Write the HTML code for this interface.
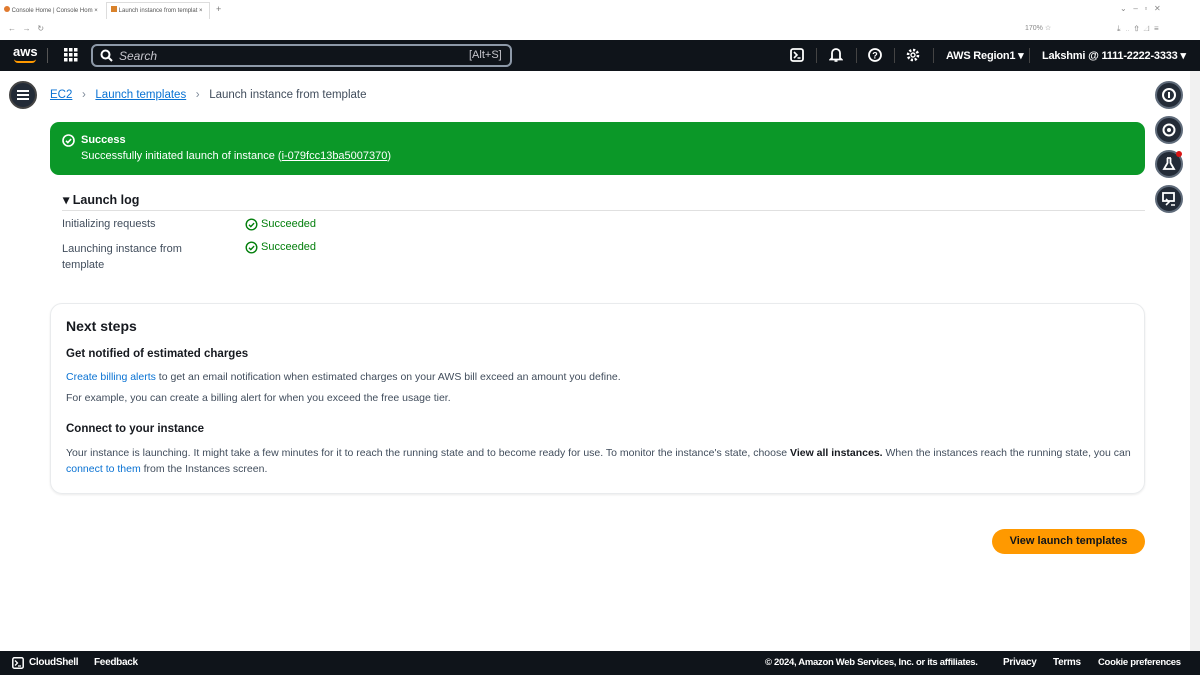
<!DOCTYPE html>
<html><head><meta charset="utf-8"><style>
*{margin:0;padding:0;box-sizing:border-box}
body{width:1200px;height:675px;overflow:hidden;background:#fff;font-family:"Liberation Sans",sans-serif;color:#16191f;position:relative;font-size:11px}
.abs{position:absolute}
.top{left:0;top:0;width:1200px;height:40px;background:#fff}
.nav{left:0;top:40px;width:1200px;height:31px;background:#0f141a;color:#fff}
.foot{left:0;top:651px;width:1200px;height:24px;background:#0f141a;color:#fff;font-size:10px;font-weight:bold;letter-spacing:-0.3px}
.link{color:#0972d3;text-decoration:underline}
.circ{width:28px;height:28px;border-radius:50%;background:#232b37;border:2px solid #5f6b7a}
.sb{left:1190px;top:71px;width:10px;height:580px;background:#f1f1f1}
</style></head><body>
<div class="abs top">
 <div class="abs" style="left:4px;top:4px;width:96px;height:14px;font-size:6px;color:#555;line-height:14px"><span style="display:inline-block;width:6px;height:6px;border-radius:50%;background:#e07a2f"></span> Console Home | Console Hom ×</div>
 <div class="abs" style="left:106px;top:2px;width:104px;height:17px;border:1px solid #ddd;border-bottom:none;font-size:6px;color:#555;line-height:16px;padding-left:4px"><span style="display:inline-block;width:6px;height:6px;background:#d9822b"></span> Launch instance from templat ×</div>
 <div class="abs" style="left:216px;top:4px;font-size:9px;color:#777">+</div>
 <div class="abs" style="left:8px;top:24px;font-size:8px;color:#888">←&nbsp;&nbsp;&nbsp;→&nbsp;&nbsp;&nbsp;↻</div>
 <div class="abs" style="left:1120px;top:4px;font-size:8px;color:#888">⌄&nbsp;&nbsp;&nbsp;–&nbsp;&nbsp;&nbsp;▫&nbsp;&nbsp;&nbsp;✕</div>
 <div class="abs" style="left:1025px;top:24px;font-size:7px;color:#888">170% ☆</div>
 <div class="abs" style="left:1117px;top:24px;font-size:8px;color:#888">⤓ &nbsp;‥ &nbsp;⇧ &nbsp;◿ &nbsp;≡</div>
</div>
<div class="abs nav">
 <div class="abs" style="left:13px;top:5px;font-weight:bold;font-size:13px;line-height:13px">aws</div>
 <div class="abs" style="left:14px;top:19px;width:22px;height:4px;border-bottom:2px solid #f90;border-radius:0 0 10px 10px"></div>
 <div class="abs" style="left:47px;top:8px;width:1px;height:15px;background:#555"></div>
 <svg class="abs" style="left:64px;top:8px" width="14" height="14"><g fill="#fff"><rect x="0" y="0" width="3.5" height="3.5"/><rect x="5" y="0" width="3.5" height="3.5"/><rect x="10" y="0" width="3.5" height="3.5"/><rect x="0" y="5" width="3.5" height="3.5"/><rect x="5" y="5" width="3.5" height="3.5"/><rect x="10" y="5" width="3.5" height="3.5"/><rect x="0" y="10" width="3.5" height="3.5"/><rect x="5" y="10" width="3.5" height="3.5"/><rect x="10" y="10" width="3.5" height="3.5"/></g></svg>
 <div class="abs" style="left:91px;top:4px;width:421px;height:23px;border:2px solid #8d99a8;border-radius:6px;background:#0f141a"></div>
 <svg class="abs" style="left:100px;top:9px" width="13" height="13"><circle cx="5.5" cy="5.5" r="4" stroke="#fff" stroke-width="2" fill="none"/><path d="M8.5 8.5L12 12" stroke="#fff" stroke-width="2"/></svg>
 <div class="abs" style="left:119px;top:9px;font-size:12px;font-style:italic;color:#c6c6cd">Search</div>
 <div class="abs" style="left:469px;top:9px;font-size:11px;color:#c6c6cd">[Alt+S]</div>
 <svg class="abs" style="left:790px;top:8px" width="14" height="14"><rect x="1" y="1" width="12" height="12" rx="2" stroke="#fff" stroke-width="1.8" fill="none"/><path d="M4 4l3 3-3 3M7.5 10h3" stroke="#fff" stroke-width="1.6" fill="none"/></svg>
 <div class="abs" style="left:816px;top:8px;width:1px;height:15px;background:#444"></div>
 <svg class="abs" style="left:829px;top:7px" width="14" height="16"><path d="M3 11V6a4 4 0 018 0v5l1.5 1.5h-11z" stroke="#fff" stroke-width="1.8" fill="none"/><path d="M5.5 14h3" stroke="#fff" stroke-width="1.6"/></svg>
 <div class="abs" style="left:856px;top:8px;width:1px;height:15px;background:#444"></div>
 <svg class="abs" style="left:868px;top:8px" width="14" height="14"><circle cx="7" cy="7" r="6" stroke="#fff" stroke-width="1.8" fill="none"/><text x="7" y="10.5" font-size="9" font-weight="bold" fill="#fff" text-anchor="middle" font-family="Liberation Sans">?</text></svg>
 <div class="abs" style="left:894px;top:8px;width:1px;height:15px;background:#444"></div>
 <svg class="abs" style="left:906px;top:8px" width="14" height="14"><circle cx="7" cy="7" r="5" stroke="#fff" stroke-width="2.6" stroke-dasharray="2.2 1.7" fill="none"/><circle cx="7" cy="7" r="2" stroke="#fff" stroke-width="1.4" fill="none"/></svg>
 <div class="abs" style="left:933px;top:8px;width:1px;height:15px;background:#444"></div>
 <div class="abs" style="left:946px;top:9px;font-size:11px;font-weight:bold;letter-spacing:-0.2px">AWS Region1 ▾</div>
 <div class="abs" style="left:1029px;top:8px;width:1px;height:15px;background:#444"></div>
 <div class="abs" style="left:1042px;top:9px;font-size:11px;font-weight:bold;letter-spacing:-0.2px">Lakshmi @ 1111-2222-3333 ▾</div>
</div>
<div class="abs sb"></div>
<div class="abs circ" style="left:9px;top:81px;border-color:#444"></div>
<svg class="abs" style="left:16px;top:89px" width="14" height="12"><path d="M1 2h12M1 6h12M1 10h12" stroke="#fff" stroke-width="2"/></svg>
<div class="abs" style="left:50px;top:89px;font-size:11.5px;color:#414d5c"><span class="link" style="color:#0972d3">EC2</span>&nbsp;&nbsp;&nbsp;<span style="color:#7d8998">›</span>&nbsp;&nbsp;&nbsp;<span class="link">Launch templates</span>&nbsp;&nbsp;&nbsp;<span style="color:#7d8998">›</span>&nbsp;&nbsp;&nbsp;Launch instance from template</div>
<div class="abs circ" style="left:1155px;top:81px"></div>
<svg class="abs" style="left:1161px;top:87px" width="16" height="16"><circle cx="8" cy="8" r="6" stroke="#fff" stroke-width="2" fill="none"/><path d="M8 5v6" stroke="#fff" stroke-width="2"/></svg>
<div class="abs circ" style="left:1155px;top:116px"></div>
<svg class="abs" style="left:1161px;top:122px" width="16" height="16"><circle cx="8" cy="8" r="5.5" stroke="#fff" stroke-width="2" fill="none"/><circle cx="8" cy="8" r="2" fill="#fff"/></svg>
<div class="abs circ" style="left:1155px;top:150px"></div>
<svg class="abs" style="left:1161px;top:156px" width="16" height="16"><path d="M6 2h4M6.5 2v5L3 13h10L9.5 7V2" stroke="#fff" stroke-width="1.8" fill="none"/></svg>
<div class="abs" style="left:1176px;top:151px;width:6px;height:6px;border-radius:50%;background:#d91515"></div>
<div class="abs circ" style="left:1155px;top:185px"></div>
<svg class="abs" style="left:1161px;top:191px" width="16" height="16"><rect x="2" y="2" width="11" height="8" stroke="#fff" stroke-width="1.8" fill="none"/><path d="M5 8l3 3-3 3M10 14h4" stroke="#fff" stroke-width="1.6" fill="none"/></svg>
<div class="abs" style="left:50px;top:122px;width:1095px;height:53px;background:#0b9828;border-radius:9px;color:#fff"></div>
<svg class="abs" style="left:62px;top:134px" width="13" height="13"><circle cx="6.5" cy="6.5" r="5.5" stroke="#fff" stroke-width="1.6" fill="none"/><path d="M4 6.8l1.8 1.8 3.3-3.5" stroke="#fff" stroke-width="1.6" fill="none"/></svg>
<div class="abs" style="left:81px;top:134px;color:#fff;font-size:11px;font-weight:bold">Success</div>
<div class="abs" style="left:81px;top:150px;color:#fff;font-size:11px">Successfully initiated launch of instance (<span style="text-decoration:underline">i-079fcc13ba5007370</span>)</div>
<div class="abs" style="left:63px;top:192px;font-size:12.5px;font-weight:bold">▾ Launch log</div>
<div class="abs" style="left:62px;top:210px;width:1083px;height:1px;background:#e0e0e0"></div>
<div class="abs" style="left:62px;top:218px;font-size:11px;color:#414d5c">Initializing requests</div>
<div class="abs" style="left:62px;top:241px;font-size:11px;color:#414d5c;line-height:16px;width:140px">Launching instance from template</div>
<svg class="abs" style="left:245px;top:218px" width="13" height="13"><circle cx="6.5" cy="6.5" r="5.3" stroke="#037f0c" stroke-width="1.4" fill="none"/><path d="M4 6.8l1.8 1.8 3.3-3.5" stroke="#037f0c" stroke-width="1.4" fill="none"/></svg>
<svg class="abs" style="left:245px;top:241px" width="13" height="13"><circle cx="6.5" cy="6.5" r="5.3" stroke="#037f0c" stroke-width="1.4" fill="none"/><path d="M4 6.8l1.8 1.8 3.3-3.5" stroke="#037f0c" stroke-width="1.4" fill="none"/></svg>
<div class="abs" style="left:261px;top:218px;font-size:11px;color:#037f0c">Succeeded</div>
<div class="abs" style="left:261px;top:241px;font-size:11px;color:#037f0c">Succeeded</div>
<div class="abs" style="left:50px;top:303px;width:1095px;height:191px;border:1px solid #e9ebed;border-radius:12px;box-shadow:0 1px 2px rgba(0,0,0,.08)"></div>
<div class="abs" style="left:66px;top:318px;font-size:14px;font-weight:bold">Next steps</div>
<div class="abs" style="left:66px;top:348px;font-size:11.5px;font-weight:bold">Get notified of estimated charges</div>
<div class="abs" style="left:66px;top:371px;font-size:10.5px;color:#414d5c"><span style="color:#0972d3">Create billing alerts</span> to get an email notification when estimated charges on your AWS bill exceed an amount you define.</div>
<div class="abs" style="left:66px;top:392px;font-size:10.5px;color:#414d5c">For example, you can create a billing alert for when you exceed the free usage tier.</div>
<div class="abs" style="left:66px;top:423px;font-size:11.5px;font-weight:bold">Connect to your instance</div>
<div class="abs" style="left:66px;top:445px;font-size:10.5px;color:#414d5c;width:1070px;line-height:16px">Your instance is launching. It might take a few minutes for it to reach the running state and to become ready for use. To monitor the instance's state, choose <b style="color:#16191f">View all instances.</b> When the instances reach the running state, you can <span style="color:#0972d3">connect to them</span> from the Instances screen.</div>
<div class="abs" style="left:992px;top:529px;width:153px;height:25px;background:#ff9900;border-radius:13px;font-size:11px;font-weight:bold;text-align:center;line-height:25px;color:#0f141a">View launch templates</div>
<div class="abs foot">
 <svg class="abs" style="left:12px;top:6px" width="12" height="12"><rect x="0.8" y="0.8" width="10.4" height="10.4" rx="1.5" stroke="#fff" stroke-width="1.5" fill="none"/><path d="M3 3.5l2.5 2.5L3 8.5M6 9h3" stroke="#fff" stroke-width="1.3" fill="none"/></svg>
 <div class="abs" style="left:29px;top:6px">CloudShell</div>
 <div class="abs" style="left:94px;top:6px">Feedback</div>
 <div class="abs" style="left:765px;top:6px;font-size:9.5px">© 2024, Amazon Web Services, Inc. or its affiliates.</div>
 <div class="abs" style="left:1003px;top:6px">Privacy</div>
 <div class="abs" style="left:1053px;top:6px">Terms</div>
 <div class="abs" style="left:1098px;top:6px;font-size:9.5px">Cookie preferences</div>
</div>
</body></html>
